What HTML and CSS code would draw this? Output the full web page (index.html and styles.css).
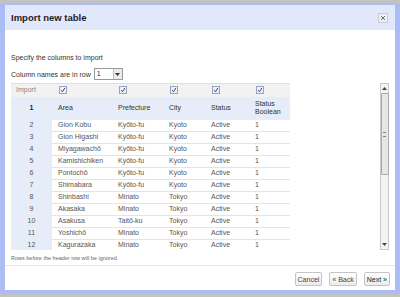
FILE: index.html
```html
<!DOCTYPE html>
<html lang="en">
  <head>
    <meta charset="UTF-8" />
    <meta name="viewport" content="width=device-width, initial-scale=1.0" />
    <title>Import new table</title>
    <link rel="stylesheet" href="styles.css">
  </head>
  <body>
    <div class="frame">
      <div class="dialog">
        <div class="title-bar">
          <h1>Import new table</h1>
          <span class="close">
            <svg width="8" height="8" viewBox="0 0 8 8"><path d="M2 2 L6 6 M6 2 L2 6" stroke="#6a7080" stroke-width="1"/></svg>
          </span>
        </div>
        <div class="content">
          <p class="intro">Specify the columns to import</p>
          <div class="row-pick">
            <span>Column names are in row</span>
            <span class="select"><span class="val">1</span><span class="arrow"><svg width="5" height="3" viewBox="0 0 5 3"><path d="M0 0 H5 L2.5 3 Z" fill="#333"/></svg></span></span>
          </div>
          <div class="grid-wrap">
            <div class="grid-scroll">
              <table class="grid">
                <tr class="import-row">
                  <td class="c0 lbl">Import</td>
                  <td class="c1"><span class="cb"></span></td>
                  <td class="c2"><span class="cb"></span></td>
                  <td class="c3"><span class="cb"></span></td>
                  <td class="c4"><span class="cb"></span></td>
                  <td class="c5"><span class="cb"></span></td>
                </tr>
                <tr class="head-row">
                  <td class="num">1</td>
                  <td>Area</td>
                  <td>Prefecture</td>
                  <td>City</td>
                  <td>Status</td>
                  <td>Status<br>Boolean</td>
                </tr>
                <tr><td class="num">2</td><td>Gion Kobu</td><td>Kyōto-fu</td><td>Kyoto</td><td>Active</td><td>1</td></tr>
                <tr><td class="num">3</td><td>Gion Higashi</td><td>Kyōto-fu</td><td>Kyoto</td><td>Active</td><td>1</td></tr>
                <tr><td class="num">4</td><td>Miyagawachō</td><td>Kyōto-fu</td><td>Kyoto</td><td>Active</td><td>1</td></tr>
                <tr><td class="num">5</td><td>Kamishichiken</td><td>Kyōto-fu</td><td>Kyoto</td><td>Active</td><td>1</td></tr>
                <tr><td class="num">6</td><td>Pontochō</td><td>Kyōto-fu</td><td>Kyoto</td><td>Active</td><td>1</td></tr>
                <tr><td class="num">7</td><td>Shimabara</td><td>Kyōto-fu</td><td>Kyoto</td><td>Active</td><td>1</td></tr>
                <tr><td class="num">8</td><td>Shinbashi</td><td>Minato</td><td>Tokyo</td><td>Active</td><td>1</td></tr>
                <tr><td class="num">9</td><td>Akasaka</td><td>Minato</td><td>Tokyo</td><td>Active</td><td>1</td></tr>
                <tr><td class="num">10</td><td>Asakusa</td><td>Taitō-ku</td><td>Tokyo</td><td>Active</td><td>1</td></tr>
                <tr><td class="num">11</td><td>Yoshichō</td><td>Minato</td><td>Tokyo</td><td>Active</td><td>1</td></tr>
                <tr><td class="num">12</td><td>Kagurazaka</td><td>Minato</td><td>Tokyo</td><td>Active</td><td>1</td></tr>
              </table>
            </div>
            <div class="scrollbar">
              <span class="up"><svg width="5" height="3" viewBox="0 0 5 3"><path d="M0 3 H5 L2.5 0 Z" fill="#444"/></svg></span>
              <span class="thumb"><span class="grip"></span></span>
              <span class="track"></span>
              <span class="down"><svg width="5" height="3" viewBox="0 0 5 3"><path d="M0 0 H5 L2.5 3 Z" fill="#444"/></svg></span>
            </div>
          </div>
          <p class="note">Rows before the header row will be ignored.</p>
        </div>
        <div class="footer">
          <button>Cancel</button>
          <button>« Back</button>
          <button class="next">Next »</button>
        </div>
      </div>
    </div>
  </body>
</html>
```

FILE: styles.css
```css
body {
  margin: 0;
  padding: 3px 0;
  background-color: #c3c3c3;
  font-family: "Liberation Sans", Arial, sans-serif;
}
.frame {
  background-color: #abbdf4;
  padding: 2px 5px 4px 5px;
}
.dialog {
  background-color: white;
  height: 285px;
  display: flex;
  flex-direction: column;
}
.title-bar {
  height: 25px;
  background-color: #e1e8fc;
  display: flex;
  align-items: center;
  justify-content: space-between;
  padding: 0 7px 0 6px;
}
h1 {
  margin: 0;
  font-size: 9.5px;
  font-weight: bold;
  color: #222;
}
.close {
  width: 8px;
  height: 8px;
  border: 1px solid #c6cbd6;
  background-color: #eef0f4;
  display: flex;
}
.content {
  flex: 1;
  padding: 0 5px 0 6px;
}
.intro {
  margin: 24px 0 0 0;
  font-size: 7px;
  color: #333;
  line-height: 8px;
}
.row-pick {
  display: flex;
  align-items: center;
  gap: 3px;
  margin-top: 6px;
  font-size: 7px;
  color: #333;
}
.select {
  display: flex;
  width: 27px;
  height: 10px;
  border: 1px solid #999;
  background-color: white;
}
.select .val {
  flex: 1;
  padding-left: 2px;
  line-height: 10px;
}
.select .arrow {
  width: 8px;
  border-left: 1px solid #bbb;
  background-color: #ececec;
  display: flex;
  align-items: center;
  justify-content: center;
}
.grid-wrap {
  display: flex;
  margin-top: 3px;
  height: 167px;
}
.grid-scroll {
  flex: 1;
  overflow: hidden;
}
.grid {
  border-collapse: collapse;
  table-layout: fixed;
  width: 279px;
  font-size: 7px;
  color: #555;
}
.grid td {
  padding: 0 0 0 6px;
  height: 11px;
  line-height: 8px;
  border-bottom: 1px solid #e4e4e4;
  white-space: nowrap;
  overflow: hidden;
}
.grid .c0 { width: 41px; }
.grid .c1 { width: 60px; }
.grid .c2 { width: 51px; }
.grid .c3 { width: 42px; }
.grid .c4 { width: 44px; }
.grid .c5 { width: 41px; }
.grid td.num {
  text-align: center;
  padding: 0;
  background-color: #e6edf8;
  border-bottom-color: #e6edf8;
}
.import-row td {
  height: 13px;
  background-color: #f2f2f2;
  border-top: 1px solid #dedede;
  border-bottom: none;
  box-sizing: border-box;
}
.import-row td.lbl {
  color: #888;
  padding-left: 5px;
}
.head-row td {
  height: 23px;
  background-color: #e6edf8;
  color: #333;
  border-bottom: none;
}
.head-row td.num {
  color: #222;
  font-weight: bold;
}
.cb {
  display: block;
  width: 6px;
  height: 6px;
  margin-left: 1px;
  border: 1px solid #9aa3b8;
  background: #eef0f6 url("data:image/svg+xml,%3Csvg xmlns='http://www.w3.org/2000/svg' width='6' height='6'%3E%3Cpath d='M1.2 3.2 L2.5 4.8 L4.8 1' fill='none' stroke='%23304890' stroke-width='1'/%3E%3C/svg%3E") no-repeat;
}
.scrollbar {
  width: 7px;
  margin-right: 1px;
  border: 1px solid #c8c8c8;
  background-color: #f4f4f4;
  display: flex;
  flex-direction: column;
  align-items: center;
}
.scrollbar .up,
.scrollbar .down {
  height: 9px;
  display: flex;
  align-items: center;
}
.thumb {
  width: 6px;
  height: 80px;
  border: 1px solid #aaa;
  border-radius: 1px;
  background-color: #e6e6e6;
  display: flex;
  align-items: center;
  justify-content: center;
}
.grip {
  width: 3px;
  height: 3px;
  border-top: 1px solid #888;
  border-bottom: 1px solid #888;
}
.track {
  flex: 1;
}
.note {
  margin: 5px 0 0 0;
  font-size: 5.5px;
  color: #666;
}
.footer {
  border-top: 1px solid #e2e7f3;
  height: 22px;
  display: flex;
  justify-content: flex-end;
  align-items: center;
  gap: 7px;
  padding: 2px 5px 0 0;
}
button {
  font-family: "Liberation Sans", Arial, sans-serif;
  font-size: 7px;
  color: #444;
  height: 14px;
  padding: 0 2px;
  border: 1px solid #c4c4c4;
  border-radius: 2px;
  background: linear-gradient(#ffffff, #ececec);
}
button.next {
  color: #222;
}
```
